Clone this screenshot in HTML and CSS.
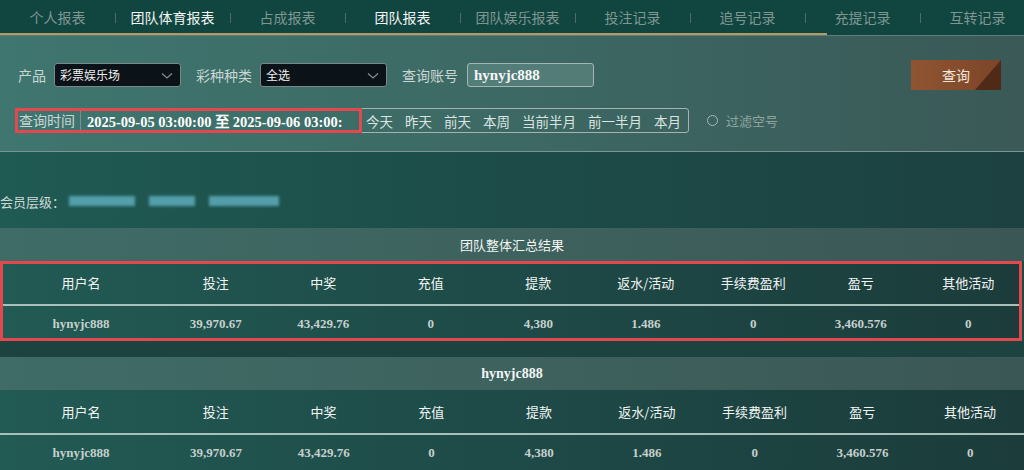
FILE: index.html
```html
<!DOCTYPE html>
<html lang="zh-CN">
<head>
    <meta charset="UTF-8">
    <title>团队报表</title>
    <link rel="stylesheet" href="styles.css">
</head>
<body>
    <nav class="tabs">
        <a class="tab">个人报表</a>
        <a class="tab on">团队体育报表</a>
        <a class="tab">占成报表</a>
        <a class="tab on">团队报表</a>
        <a class="tab">团队娱乐报表</a>
        <a class="tab">投注记录</a>
        <a class="tab">追号记录</a>
        <a class="tab">充提记录</a>
        <a class="tab">互转记录</a>
    </nav>

    <section class="filters">
        <div class="filter-row">
            <label class="lbl">产品</label>
            <div class="select">彩票娱乐场
                <svg class="chev" width="12" height="8" viewBox="0 0 12 8"><path d="M1 1.5 L6 6 L11 1.5" fill="none" stroke="#8a8f92" stroke-width="1.2"/></svg>
            </div>
            <label class="lbl">彩种种类</label>
            <div class="select">全选
                <svg class="chev" width="12" height="8" viewBox="0 0 12 8"><path d="M1 1.5 L6 6 L11 1.5" fill="none" stroke="#8a8f92" stroke-width="1.2"/></svg>
            </div>
            <label class="lbl">查询账号</label>
            <div class="account">hynyjc888</div>
            <button class="btn-query">查询</button>
        </div>
        <div class="filter-row">
            <div class="date-box">
                <div class="date-main">
                    <span class="date-lbl">查询时间</span>
                    <span class="date-val">2025-09-05 03:00:00 至 2025-09-06 03:00:</span>
                </div>
                <span class="quick">今天</span>
                <span class="quick">昨天</span>
                <span class="quick">前天</span>
                <span class="quick">本周</span>
                <span class="quick">当前半月</span>
                <span class="quick">前一半月</span>
                <span class="quick">本月</span>
            </div>
            <label class="radio"><span class="dot"></span>过滤空号</label>
        </div>
    </section>

    <section class="member">
        <span>会员层级：</span>
        <span class="blur b1"></span>
        <span class="blur b2"></span>
        <span class="blur b3"></span>
    </section>

    <div class="bar-title">团队整体汇总结果</div>
    <table class="report marked">
        <thead>
            <tr><th>用户名</th><th>投注</th><th>中奖</th><th>充值</th><th>提款</th><th>返水/活动</th><th>手续费盈利</th><th>盈亏</th><th>其他活动</th></tr>
        </thead>
        <tbody>
            <tr><td>hynyjc888</td><td>39,970.67</td><td>43,429.76</td><td>0</td><td>4,380</td><td>1.486</td><td>0</td><td>3,460.576</td><td>0</td></tr>
        </tbody>
    </table>

    <div class="gap"></div>

    <div class="bar-title user">hynyjc888</div>
    <table class="report">
        <thead>
            <tr><th>用户名</th><th>投注</th><th>中奖</th><th>充值</th><th>提款</th><th>返水/活动</th><th>手续费盈利</th><th>盈亏</th><th>其他活动</th></tr>
        </thead>
        <tbody>
            <tr><td>hynyjc888</td><td>39,970.67</td><td>43,429.76</td><td>0</td><td>4,380</td><td>1.486</td><td>0</td><td>3,460.576</td><td>0</td></tr>
        </tbody>
    </table>
</body>
</html>
```

FILE: styles.css
```css
/* Basic Reset */
* {
    margin: 0;
    padding: 0;
    box-sizing: border-box;
}

body {
    width: 1024px;
    height: 470px;
    overflow: hidden;
    background: #1d4a46;
    font-family: "Noto Sans CJK SC", "Noto Sans", sans-serif;
    font-size: 13px;
    color: #d8e2df;
}

/* Top tabs */
.tabs {
    display: flex;
    height: 36px;
    background: #114640;
    border-bottom: 1px solid #5f7c78;
    position: relative;
    white-space: nowrap;
    overflow: hidden;
}

.tabs::after {
    content: "";
    position: absolute;
    left: 0;
    bottom: -1px;
    width: 827px;
    height: 3px;
    background: #b49a62;
}

.tab {
    flex: 0 0 115px;
    height: 34px;
    line-height: 34px;
    text-align: center;
    font-size: 14px;
    color: #7f9692;
    position: relative;
}

.tab + .tab::before {
    content: "";
    position: absolute;
    left: 0;
    top: 13px;
    width: 1px;
    height: 10px;
    background: #4f6d68;
}

.tab.on {
    color: #f2f5f3;
}

/* Filter panel */
.filters {
    height: 116px;
    padding: 27px 0 0 18px;
    background: linear-gradient(90deg, #3f766f 0%, #3d6a65 45%, #3a5957 100%);
    border-bottom: 1px solid #7a9491;
}

.filter-row {
    display: flex;
    align-items: center;
    height: 24px;
}

.filter-row + .filter-row {
    margin-top: 21px;
    height: 25px;
}

.lbl {
    font-size: 14px;
    color: #c9d6d3;
    margin-right: 8px;
}

.select {
    width: 127px;
    height: 24px;
    line-height: 22px;
    padding-left: 5px;
    margin-right: 15px;
    background: #0c1318;
    border: 1px solid #7c878a;
    border-radius: 3px;
    color: #f0f0f0;
    font-size: 12px;
    position: relative;
}

.chev {
    position: absolute;
    right: 7px;
    top: 8px;
}

.account {
    width: 127px;
    height: 24px;
    line-height: 22px;
    padding-left: 6px;
    margin-left: 1px;
    background: rgba(110, 150, 146, 0.45);
    border: 1px solid #a5b5b2;
    border-radius: 3px;
    font-family: "Liberation Serif", serif;
    font-weight: bold;
    font-size: 15px;
    color: #f5f7f6;
}

.btn-query {
    margin-left: auto;
    margin-right: 23px;
    width: 90px;
    height: 30px;
    border: none;
    background: linear-gradient(90deg, #8f5532 0%, #7c4528 100%);
    color: #f3e8df;
    font-family: "Noto Sans CJK SC", sans-serif;
    font-size: 14px;
    position: relative;
    overflow: hidden;
    cursor: pointer;
}

.btn-query::after {
    content: "";
    position: absolute;
    right: 0;
    top: 0;
    width: 26px;
    height: 30px;
    background: #4f2a16;
    clip-path: polygon(100% 0, 100% 100%, 0 100%);
}

/* Date + quick range */
.date-box {
    display: flex;
    align-items: center;
    height: 25px;
    margin-left: -1px;
    border: 1px solid #a4b2b0;
    border-radius: 3px;
    padding-right: 7px;
}

.date-main {
    display: flex;
    align-items: center;
    width: 347px;
    height: 25px;
    margin: -1px 0 -1px -3px;
    outline: 3px solid #e3484e;
    outline-offset: -3px;
}

.date-lbl {
    padding: 0 5px 0 4px;
    font-size: 14px;
    color: #c9d6d3;
    border-right: 1px solid #7d8f8c;
    line-height: 19px;
}

.date-val {
    width: 272px;
    overflow: hidden;
    white-space: nowrap;
    padding-left: 6px;
    font-family: "Liberation Serif", serif;
    font-weight: bold;
    font-size: 14.5px;
    color: #ffffff;
}

.quick {
    font-size: 13.5px;
    color: #dbe4e1;
    margin-left: 12px;
}

.date-main + .quick {
    margin-left: 4px;
}

.radio {
    display: flex;
    align-items: center;
    margin-left: 18px;
    font-size: 13px;
    color: #8ea6a2;
}

.dot {
    width: 11px;
    height: 11px;
    border: 1px solid #a8b8b5;
    border-radius: 50%;
    margin-right: 8px;
}

/* Member level */
.member {
    display: flex;
    align-items: center;
    height: 76px;
    padding-top: 22px;
    background: linear-gradient(90deg, #1f5a53 0%, #1d4c48 50%, #1c4140 100%);
    font-size: 13px;
    color: #ced9d6;
}

.blur {
    height: 10px;
    background: #5aa7b6;
    filter: blur(1.5px);
    opacity: 0.9;
}

.b1 { width: 66px; margin-left: 4px; }
.b2 { width: 46px; margin-left: 14px; }
.b3 { width: 70px; margin-left: 14px; }

/* Result tables */
.bar-title {
    height: 33px;
    line-height: 33px;
    text-align: center;
    background: linear-gradient(90deg, #3f6c67 0%, #3e625e 50%, #3b5755 100%);
    color: #f2f5f4;
    font-size: 13px;
}

.bar-title.user {
    font-family: "Liberation Serif", serif;
    font-weight: bold;
    font-size: 14px;
}

.report {
    width: 1024px;
    border-collapse: collapse;
    table-layout: fixed;
    background: linear-gradient(90deg, #225a54 0%, #1e4a47 50%, #1b3c3b 100%);
}

.report th:first-child,
.report td:first-child {
    width: 162px;
}

.report th {
    height: 44px;
    font-weight: normal;
    font-size: 13px;
    color: #f2f5f4;
    border-bottom: 2px solid #a9bfbb;
}

.report td {
    height: 36px;
    text-align: center;
    font-family: "Liberation Serif", serif;
    font-weight: bold;
    font-size: 13px;
    color: #c7d0cd;
}

.report.marked {
    outline: 3px solid #e3484e;
    outline-offset: -3px;
    width: 1022px;
}

.gap {
    height: 16px;
    background: #1c4340;
}
```
